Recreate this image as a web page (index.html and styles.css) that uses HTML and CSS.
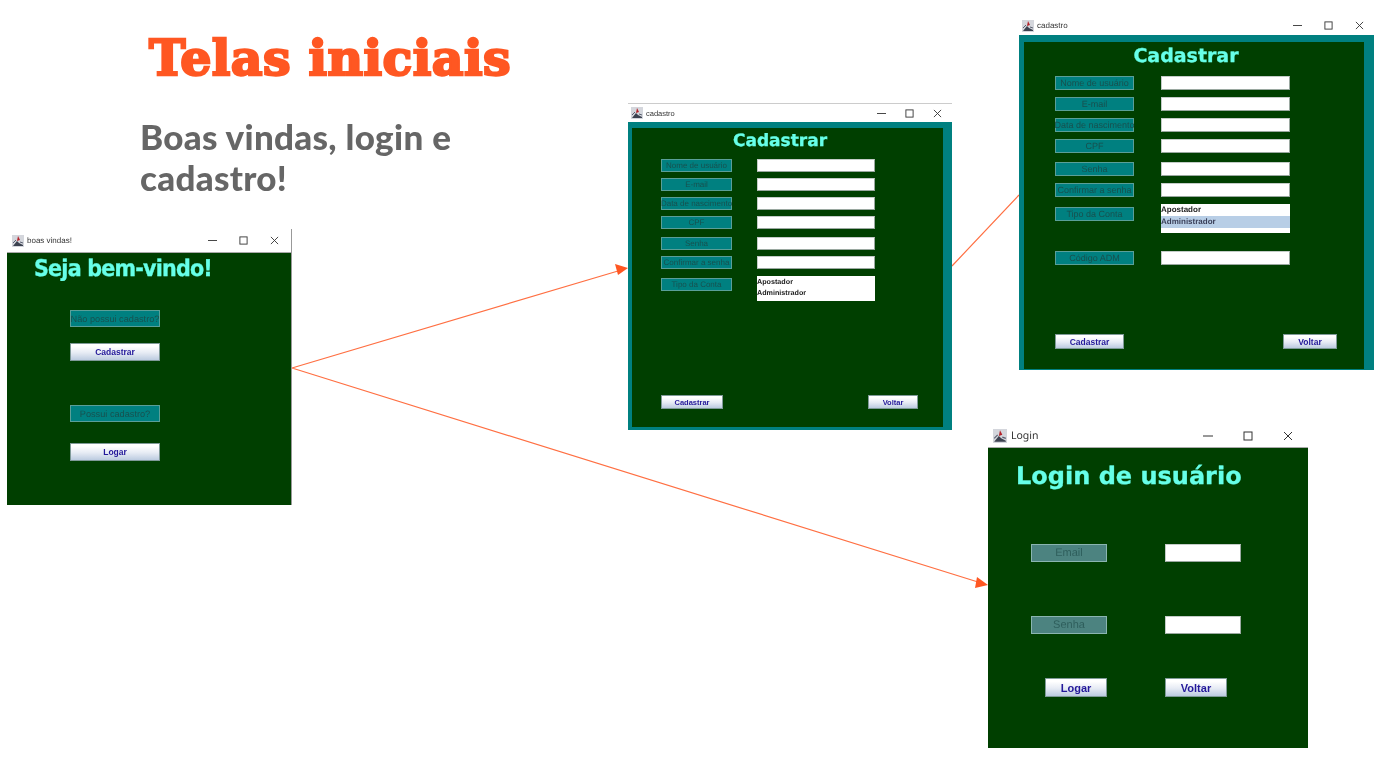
FILE: index.html
```html
<!DOCTYPE html>
<html lang="pt-BR">
<head>
    <meta charset="UTF-8">
    <meta name="viewport" content="width=device-width, initial-scale=1.0">
    <title>Telas iniciais</title>
    <link rel="stylesheet" href="styles.css">
</head>
<body>

<svg width="0" height="0" class="defs">
    <symbol id="java" viewBox="0 0 12 12">
        <rect width="12" height="12" fill="#d4d6dc"/>
        <path d="M1 11 L5 6 L7 8 L11 10 L11 11 Z" fill="#3c4250"/>
        <path d="M6 1 L8 5 L5 6 Z" fill="#b4232a"/>
        <path d="M1 8 L4 5 M8 7 L11 8" stroke="#5a6070" fill="none"/>
    </symbol>
    <symbol id="win-min" viewBox="0 0 10 10"><path d="M0 5 H10" stroke="#333" fill="none"/></symbol>
    <symbol id="win-max" viewBox="0 0 10 10"><rect x="1" y="1" width="8" height="8" stroke="#333" fill="none"/></symbol>
    <symbol id="win-close" viewBox="0 0 10 10"><path d="M1 1 L9 9 M9 1 L1 9" stroke="#333" fill="none"/></symbol>
</svg>

<main class="slide">
    <header class="intro">
        <h1>Telas iniciais</h1>
        <p>Boas vindas, login e cadastro!</p>
    </header>

    <!-- setas entre as telas -->
    <svg class="arrows" width="1387" height="775" viewBox="0 0 1387 775">
        <path d="M292 368 L618 271 M292 368 L978 582 M952 266 L1019 195" stroke="#ff6f42" stroke-width="1.2" fill="none"/>
        <path d="M628 268 L615 264 L618 275 Z" fill="#ff5722"/>
        <path d="M988 585 L977 577 L975 588 Z" fill="#ff5722"/>
    </svg>

    <!-- boas vindas -->
    <section class="win win-welcome">
        <div class="win-bar">
            <svg class="app-icon"><use href="#java"/></svg>
            <span class="win-name">boas vindas!</span>
            <svg class="ctl"><use href="#win-min"/></svg>
            <svg class="ctl"><use href="#win-max"/></svg>
            <svg class="ctl"><use href="#win-close"/></svg>
        </div>
        <div class="win-body">
            <h2 class="win-title">Seja bem-vindo!</h2>
            <div class="tag tag-first">Não possui cadastro?</div>
            <button class="btn btn-a">Cadastrar</button>
            <div class="tag tag-second">Possui cadastro?</div>
            <button class="btn btn-b">Logar</button>
        </div>
    </section>

    <!-- cadastro, apostador -->
    <section class="win win-cad win-cad-sm">
        <div class="win-bar">
            <svg class="app-icon"><use href="#java"/></svg>
            <span class="win-name">cadastro</span>
            <svg class="ctl"><use href="#win-min"/></svg>
            <svg class="ctl"><use href="#win-max"/></svg>
            <svg class="ctl"><use href="#win-close"/></svg>
        </div>
        <div class="win-frame">
            <div class="win-body">
                <h2 class="win-title">Cadastrar</h2>
                <div class="rows">
                    <div class="row"><div class="tag">Nome de usuário</div><div class="input"></div></div>
                    <div class="row"><div class="tag">E-mail</div><div class="input"></div></div>
                    <div class="row"><div class="tag">Data de nascimento</div><div class="input"></div></div>
                    <div class="row"><div class="tag">CPF</div><div class="input"></div></div>
                    <div class="row row-wide"><div class="tag">Senha</div><div class="input"></div></div>
                    <div class="row"><div class="tag">Confirmar a senha</div><div class="input"></div></div>
                    <div class="row row-list">
                        <div class="tag">Tipo da Conta</div>
                        <ul class="list">
                            <li>Apostador</li>
                            <li>Administrador</li>
                        </ul>
                    </div>
                </div>
                <div class="actions">
                    <button class="btn btn-save">Cadastrar</button>
                    <button class="btn btn-back">Voltar</button>
                </div>
            </div>
        </div>
    </section>

    <!-- cadastro, administrador -->
    <section class="win win-cad win-cad-lg">
        <div class="win-bar">
            <svg class="app-icon"><use href="#java"/></svg>
            <span class="win-name">cadastro</span>
            <svg class="ctl"><use href="#win-min"/></svg>
            <svg class="ctl"><use href="#win-max"/></svg>
            <svg class="ctl"><use href="#win-close"/></svg>
        </div>
        <div class="win-frame">
            <div class="win-body">
                <h2 class="win-title">Cadastrar</h2>
                <div class="rows">
                    <div class="row"><div class="tag">Nome de usuário</div><div class="input"></div></div>
                    <div class="row"><div class="tag">E-mail</div><div class="input"></div></div>
                    <div class="row"><div class="tag">Data de nascimento</div><div class="input"></div></div>
                    <div class="row"><div class="tag">CPF</div><div class="input"></div></div>
                    <div class="row row-wide"><div class="tag">Senha</div><div class="input"></div></div>
                    <div class="row"><div class="tag">Confirmar a senha</div><div class="input"></div></div>
                    <div class="row row-list">
                        <div class="tag">Tipo da Conta</div>
                        <ul class="list">
                            <li>Apostador</li>
                            <li class="selected">Administrador</li>
                        </ul>
                    </div>
                    <div class="row row-code"><div class="tag">Código ADM</div><div class="input"></div></div>
                </div>
                <div class="actions">
                    <button class="btn btn-save">Cadastrar</button>
                    <button class="btn btn-back">Voltar</button>
                </div>
            </div>
        </div>
    </section>

    <!-- login -->
    <section class="win win-login">
        <div class="win-bar">
            <svg class="app-icon"><use href="#java"/></svg>
            <span class="win-name">Login</span>
            <svg class="ctl"><use href="#win-min"/></svg>
            <svg class="ctl"><use href="#win-max"/></svg>
            <svg class="ctl"><use href="#win-close"/></svg>
        </div>
        <div class="win-body">
            <h2 class="win-title">Login de usuário</h2>
            <div class="login-grid">
                <div class="tag">Email</div><div class="input"></div>
                <div class="tag">Senha</div><div class="input"></div>
                <button class="btn btn-login">Logar</button><button class="btn btn-back">Voltar</button>
            </div>
        </div>
    </section>
</main>

</body>
</html>
```

FILE: styles.css
```css
/* Base */
html, body {
    margin: 0;
    padding: 0;
    background: #fff;
}
.defs {
    position: absolute;
}
.slide {
    position: relative;
    width: 1387px;
    height: 775px;
    overflow: hidden;
    font-family: "Liberation Sans", Arial, sans-serif;
}

/* Titulo do slide */
.intro {
    padding-top: 28px;
}
.intro h1 {
    margin: 0 0 0 149px;
    font-family: "DejaVu Serif", serif;
    font-size: 49px;
    font-weight: 700;
    line-height: 60px;
    letter-spacing: 0.4px;
    color: #ff5722;
    -webkit-text-stroke: 2.4px #ff5722;
    filter: blur(0.4px);
}
.intro p {
    width: 340px;
    margin: 28px 0 0 140px;
    font-family: Lato, sans-serif;
    font-size: 35px;
    font-weight: 900;
    line-height: 41px;
    letter-spacing: 0.3px;
    color: #666;
    filter: blur(0.4px);
}
.arrows {
    position: absolute;
    left: 0;
    top: 0;
}

/* Janelas */
.win {
    position: absolute;
    display: flex;
    flex-direction: column;
    background: #fff;
    filter: blur(0.45px);
    text-rendering: geometricPrecision;
}
.win-bar {
    display: flex;
    align-items: center;
    flex: none;
    padding-left: 5px;
    box-sizing: border-box;
    color: #333;
}
.app-icon {
    width: 12px;
    height: 12px;
    margin-right: 3px;
}
.win-name {
    flex: 1;
    font-family: "Liberation Sans", sans-serif;
    font-size: 8px;
}
.ctl {
    width: 9px;
    height: 9px;
    margin-right: 22px;
}
.ctl:last-child {
    margin-right: 12px;
}
.win-body {
    flex: 1;
    display: flex;
    flex-direction: column;
    min-height: 0;
    background: #003f00;
}
.win-title {
    margin: 0;
    font-family: "DejaVu Sans", sans-serif;
    font-weight: 700;
    color: #66ffe8;
    -webkit-text-stroke: 0.3px #66ffe8;
}
.tag {
    box-sizing: border-box;
    display: flex;
    align-items: center;
    justify-content: center;
    background: #008080;
    border: 1px solid #5a9f98;
    color: #17504e;
    white-space: nowrap;
}
.input {
    box-sizing: border-box;
    background: #fff;
    border: 1px solid #c4ccc8;
    border-bottom-color: #9aa8a0;
    border-right-color: #9aa8a0;
}
.btn {
    box-sizing: border-box;
    display: block;
    margin: 0;
    padding: 0;
    font-family: "Liberation Sans", sans-serif;
    font-weight: 700;
    color: #24199a;
    background: linear-gradient(#fff 15%, #e6ebf4 55%, #bccbe0);
    border: 1px solid #7f9a98;
}

/* Boas vindas */
.win-welcome {
    left: 7px;
    top: 229px;
    width: 285px;
    height: 276px;
    border-right: 1px solid #999;
    box-sizing: border-box;
}
.win-welcome .win-bar {
    height: 24px;
    border-bottom: 1px solid #aaa;
}
.win-welcome .win-title {
    height: 32px;
    margin-left: 27px;
    font-size: 23px;
    line-height: 32px;
    font-stretch: condensed;
    letter-spacing: -0.8px;
}
.win-welcome .tag,
.win-welcome .btn {
    width: 90px;
    margin-left: 63px;
}
.win-welcome .tag {
    height: 17px;
    font-size: 9.2px;
}
.win-welcome .btn {
    height: 18px;
    font-size: 8.5px;
}
.tag-first {
    margin-top: 25px;
}
.btn-a {
    margin-top: 16px;
}
.tag-second {
    margin-top: 44px;
}
.btn-b {
    margin-top: 21px;
}

/* Cadastro */
.win-cad .win-frame {
    flex: 1;
    display: flex;
    flex-direction: column;
    min-height: 0;
    background: #008080;
}
.win-cad .win-title {
    text-align: center;
}
.rows {
    display: flex;
    flex-direction: column;
}
.row {
    display: flex;
    align-items: flex-start;
}
.list {
    list-style: none;
    margin: 0;
    padding: 0;
    background: #fff;
    font-weight: 700;
    color: #222;
}
.list .selected {
    background: #b8cee6;
    color: #3a3f58;
}
.actions {
    display: flex;
    justify-content: space-between;
    margin-top: auto;
}

.win-cad-sm {
    left: 628px;
    top: 103px;
    width: 324px;
    height: 327px;
    border-top: 1px solid #ccc;
    box-sizing: border-box;
}
.win-cad-sm .win-bar {
    height: 18px;
    padding-left: 3px;
}
.win-cad-sm .win-name {
    font-size: 7.5px;
}
.win-cad-sm .ctl {
    margin-right: 19px;
}
.win-cad-sm .ctl:last-child {
    margin-right: 10px;
}
.win-cad-sm .win-frame {
    padding: 6px 9px 3px 4px;
}
.win-cad-sm .win-body {
    padding: 0 25px 18px 29px;
}
.win-cad-sm .win-title {
    height: 31px;
    font-size: 17px;
    line-height: 26px;
    transform: translateX(-9.5px);
}
.win-cad-sm .row {
    gap: 25px;
    margin-bottom: 6px;
}
.win-cad-sm .row-wide {
    margin-top: 2px;
}
.win-cad-sm .tag {
    flex: none;
    width: 71px;
    height: 13px;
    font-size: 8px;
}
.win-cad-sm .input,
.win-cad-sm .list {
    width: 118px;
    height: 13px;
}
.win-cad-sm .row-list {
    margin-top: 1px;
}
.win-cad-sm .row-list .tag {
    margin-top: 2px;
}
.win-cad-sm .list {
    height: 25px;
    font-size: 7.2px;
    line-height: 11px;
    padding-top: 0;
    box-sizing: border-box;
}
.win-cad-sm .btn {
    height: 14px;
    font-size: 7.5px;
}
.win-cad-sm .btn-save {
    width: 62px;
}
.win-cad-sm .btn-back {
    width: 50px;
}

.win-cad-lg {
    left: 1019px;
    top: 16px;
    width: 355px;
    height: 354px;
}
.win-cad-lg .win-bar {
    height: 19px;
    padding-left: 3px;
}
.win-cad-lg .ctl:last-child {
    margin-right: 10px;
}
.win-cad-lg .win-frame {
    padding: 7px 10px 1px 5px;
}
.win-cad-lg .win-body {
    padding: 0 27px 20px 31px;
}
.win-cad-lg .win-title {
    height: 34px;
    font-size: 19px;
    line-height: 28px;
    transform: translateX(-10px);
}
.win-cad-lg .row {
    gap: 27px;
    margin-bottom: 7px;
}
.win-cad-lg .row-wide {
    margin-top: 1.5px;
}
.win-cad-lg .tag {
    flex: none;
    width: 79px;
    height: 14px;
    font-size: 9px;
}
.win-cad-lg .input,
.win-cad-lg .list {
    width: 129px;
    height: 14px;
}
.win-cad-lg .row-list .tag {
    margin-top: 3px;
}
.win-cad-lg .list {
    height: 29px;
    font-size: 8px;
    line-height: 12px;
    box-sizing: border-box;
}
.win-cad-lg .row-code {
    margin-top: 11px;
}
.win-cad-lg .btn {
    height: 15px;
    font-size: 8.5px;
}
.win-cad-lg .btn-save {
    width: 69px;
}
.win-cad-lg .btn-back {
    width: 54px;
}

/* Login */
.win-login {
    left: 988px;
    top: 425px;
    width: 320px;
    height: 323px;
}
.win-login .win-bar {
    height: 23px;
    border-bottom: 1px solid #aaa;
    padding-left: 5px;
}
.win-login .win-name {
    font-family: "Noto Sans", sans-serif;
    font-size: 10.5px;
}
.win-login .app-icon {
    width: 14px;
    height: 14px;
    margin-right: 4px;
}
.win-login .ctl {
    width: 10px;
    height: 10px;
    margin-right: 30px;
}
.win-login .ctl:last-child {
    margin-right: 15px;
}
.win-login .win-title {
    height: 96px;
    padding: 12px 0 0 28px;
    box-sizing: border-box;
    font-size: 24px;
    line-height: 32px;
}
.login-grid {
    display: grid;
    grid-template-columns: 76px 76px;
    grid-auto-rows: 18px;
    column-gap: 58px;
    row-gap: 54px;
    margin-left: 43px;
}
.win-login .tag {
    background: #4c8380;
    border-color: #8ab5b0;
    color: #2f5f5c;
    font-size: 11px;
}
.win-login .btn {
    width: 62px;
    height: 19px;
    margin-top: -10px;
    font-size: 11px;
}
.win-login .btn-login {
    justify-self: end;
}
```
